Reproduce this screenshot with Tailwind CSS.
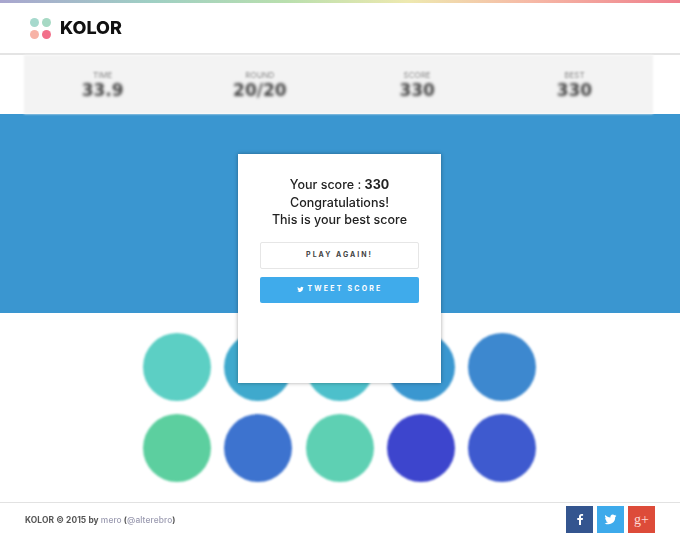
<!DOCTYPE html>
<html>
<head>
<meta charset="utf-8">
<script src="https://cdn.jsdelivr.net/npm/@tailwindcss/browser@4"></script>
</head>
<body class="bg-white font-['Inter',sans-serif]">
<div class="relative w-[680px] h-[537px] overflow-hidden flex flex-col bg-white">
  <div class="h-[3px] shrink-0 bg-[linear-gradient(90deg,#a9a6cf_0%,#9fcfc4_22%,#b9dfae_42%,#eee9b0_60%,#f6b9a6_78%,#ee7f8c_100%)]"></div>
  <header class="h-[52px] shrink-0 flex items-center pl-[30px] gap-[9px] border-b-2 border-[#e4e4e4] blur-[0.3px]">
    <div class="grid grid-cols-2 gap-x-[3px] gap-y-[3px] w-[21px]">
      <span class="w-[9px] h-[9px] rounded-full bg-[#a6d9cd]"></span>
      <span class="w-[9px] h-[9px] rounded-full bg-[#a6d9c4]"></span>
      <span class="w-[9px] h-[9px] rounded-full bg-[#f7b3a6]"></span>
      <span class="w-[9px] h-[9px] rounded-full bg-[#f2708a]"></span>
    </div>
    <span class="text-[18px] leading-none font-extrabold text-[#111]">KOLOR</span>
  </header>
  <section class="h-[59px] shrink-0 mx-[24px] w-[629px] bg-[#f3f3f3] grid grid-cols-4 text-center text-[#444] blur-[1px]">
    <div class="pt-[15px]"><div class="text-[8px] leading-[10px] text-[#888] blur-[0.5px]">TIME</div><div class="text-[17px] leading-[20px] font-bold font-['DejaVu_Sans',sans-serif] blur-[1px]">33.9</div></div>
    <div class="pt-[15px]"><div class="text-[8px] leading-[10px] text-[#888] blur-[0.5px]">ROUND</div><div class="text-[17px] leading-[20px] font-bold font-['DejaVu_Sans',sans-serif] blur-[1px]">20/20</div></div>
    <div class="pt-[15px]"><div class="text-[8px] leading-[10px] text-[#888] blur-[0.5px]">SCORE</div><div class="text-[17px] leading-[20px] font-bold font-['DejaVu_Sans',sans-serif] blur-[1px]">330</div></div>
    <div class="pt-[15px]"><div class="text-[8px] leading-[10px] text-[#888] blur-[0.5px]">BEST</div><div class="text-[17px] leading-[20px] font-bold font-['DejaVu_Sans',sans-serif] blur-[1px]">330</div></div>
  </section>
  <section class="h-[199px] shrink-0 bg-[#3a96d0]"></section>
  <main class="flex-1 pt-[20px] pl-[143px]">
    <div class="grid grid-cols-[repeat(5,68px)] gap-x-[13.25px] gap-y-[13px] blur-[1.2px]">
      <span class="h-[68px] rounded-full bg-[#5ccfc4]"></span>
      <span class="h-[68px] rounded-full bg-[#3fa9cd]"></span>
      <span class="h-[68px] rounded-full bg-[#4dc0cb]"></span>
      <span class="h-[68px] rounded-full bg-[#3a97d0]"></span>
      <span class="h-[68px] rounded-full bg-[#3d88cf]"></span>
      <span class="h-[68px] rounded-full bg-[#5ccf9f]"></span>
      <span class="h-[68px] rounded-full bg-[#3d73cf]"></span>
      <span class="h-[68px] rounded-full bg-[#5ed0b3]"></span>
      <span class="h-[68px] rounded-full bg-[#3d45cd]"></span>
      <span class="h-[68px] rounded-full bg-[#3e5acf]"></span>
    </div>
  </main>
  <footer class="h-[35px] shrink-0 border-t border-[#e2e2e2] flex items-center justify-between pl-[25px] pr-[25px]">
    <p class="text-[8.4px] font-bold text-[#555] tracking-[0.1px] blur-[0.2px]">KOLOR © 2015 by <span class="font-medium text-[#9a9ab0]">mero</span> (<span class="font-medium text-[#9a9ab0]">@alterebro</span>)</p>
    <div class="flex gap-[4px] -mt-[1px]">
      <a class="w-[27px] h-[27px] bg-[#34558f] flex items-center justify-center">
        <svg width="12" height="13" viewBox="0 0 24 24" fill="#fff"><path d="M14 23v-10h3.5l.5-4h-4V6.5c0-1.2.4-2 2-2h2.2V1.1C17.800 1 16.600 1 15.400 1 12.200 1 10 2.900 10 6.100V9H6.500v4H10v10z"/></svg>
      </a>
      <a class="w-[27px] h-[27px] bg-[#3daaeb] flex items-center justify-center">
        <svg width="13" height="13" viewBox="0 0 24 24" fill="#fff"><path d="M23 5c-.8.400-1.700.600-2.600.700.900-.600 1.700-1.400 2-2.500-.900.500-1.900.900-2.900 1.100a4.500 4.500 0 0 0-7.700 4.100C8 8.200 4.700 6.400 2.500 3.700c-1.200 2-.600 4.700 1.400 6-.700 0-1.400-.200-2-.600 0 2.200 1.500 4.100 3.600 4.500-.700.200-1.400.200-2 .100.600 1.800 2.300 3.100 4.200 3.100A9 9 0 0 1 1 18.700 12.800 12.800 0 0 0 20.700 7.300c.900-.600 1.700-1.400 2.300-2.300z"/></svg>
      </a>
      <a class="w-[27px] h-[27px] bg-[#dd4b39] flex items-center justify-center text-[#ffd9d3] text-[14px] font-['Liberation_Serif',serif]">g+</a>
    </div>
  </footer>
  <div class="absolute left-[238px] top-[154px] w-[203px] h-[229px] bg-white shadow-[0_0_4px_rgba(0,0,0,0.35)] flex flex-col items-center pt-[22px]">
    <div class="text-center text-[12.5px] leading-[17.500px] font-medium text-[#222] blur-[0.2px]">
      <p>Your score : <b class="font-bold">330</b></p>
      <p>Congratulations!</p>
      <p>This is your best score</p>
    </div>
    <button class="mt-[13px] w-[159px] h-[27px] bg-white border border-[#e6e6e6] rounded-[2px] text-[7px] font-bold tracking-[2px] text-[#444]">PLAY AGAIN!</button>
    <button class="mt-[8px] w-[159px] h-[26px] bg-[#3fabeb] rounded-[2px] text-[7px] font-bold tracking-[2.200px] text-white flex items-center justify-center gap-[4px]">
      <svg width="7" height="7" viewBox="0 0 24 24" fill="#fff"><path d="M23 5c-.8.400-1.700.600-2.600.700.900-.600 1.700-1.400 2-2.500-.900.500-1.900.900-2.900 1.100a4.500 4.500 0 0 0-7.700 4.100C8 8.200 4.700 6.400 2.500 3.700c-1.200 2-.600 4.700 1.400 6-.700 0-1.400-.200-2-.600 0 2.200 1.500 4.100 3.600 4.500-.700.200-1.400.200-2 .100.600 1.800 2.300 3.100 4.200 3.100A9 9 0 0 1 1 18.700 12.800 12.800 0 0 0 20.700 7.300c.900-.600 1.700-1.400 2.300-2.300z"/></svg>
      TWEET SCORE
    </button>
  </div>
</div>
</body>
</html>
